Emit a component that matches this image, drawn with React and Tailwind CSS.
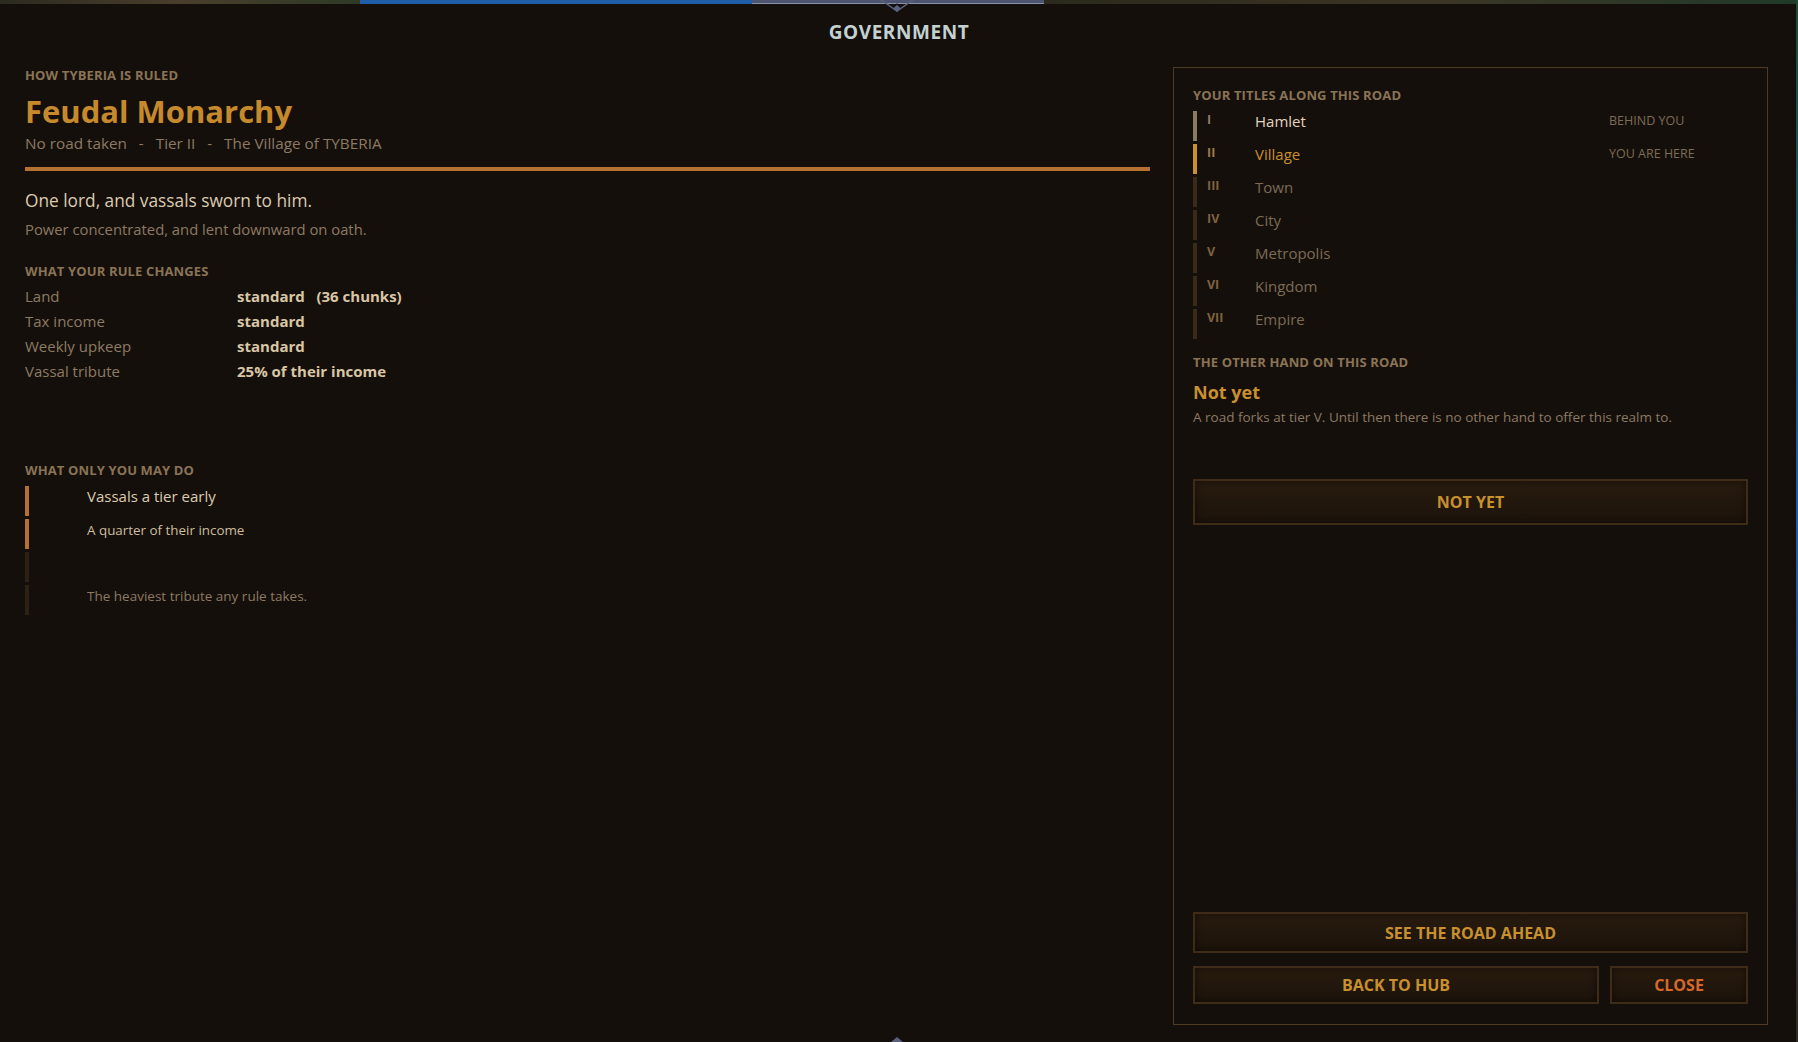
import React from 'react';

const titles = [
  { num: 'I', name: 'Hamlet', state: 'past', note: 'BEHIND YOU' },
  { num: 'II', name: 'Village', state: 'current', note: 'YOU ARE HERE' },
  { num: 'III', name: 'Town', state: 'future' },
  { num: 'IV', name: 'City', state: 'future' },
  { num: 'V', name: 'Metropolis', state: 'future' },
  { num: 'VI', name: 'Kingdom', state: 'future' },
  { num: 'VII', name: 'Empire', state: 'future' },
];

const rowStyles = {
  past: { bar: 'bg-[#8a7a63]', num: 'text-[#8c7c66]', name: 'text-[#e2d4bf]' },
  current: { bar: 'bg-[#c8902f]', num: 'text-[#9c7c48]', name: 'text-[#c8902f]' },
  future: { bar: 'bg-[#3b2a1a]', num: 'text-[#7e6240]', name: 'text-[#7c6b56]' },
};

const changes = [
  { label: 'Land', value: 'standard', extra: '(36 chunks)' },
  { label: 'Tax income', value: 'standard' },
  { label: 'Weekly upkeep', value: 'standard' },
  { label: 'Vassal tribute', value: '25% of their income' },
];

function Heading({ children, className = '' }) {
  return (
    <p className={`text-[13px] leading-4 font-bold tracking-[0.01em] text-[#8a7456] uppercase ${className}`}>
      {children}
    </p>
  );
}

function WoodButton({ children, className = '', tone = 'gold' }) {
  return (
    <button
      className={`flex items-center justify-center border-2 border-[#3e2b18] bg-gradient-to-b from-[#2a1c0f] via-[#22170d] to-[#1d140b] shadow-[inset_0_0_8px_rgba(0,0,0,0.55)] text-[16px] font-bold ${tone === 'gold' ? 'text-[#c8902e]' : 'text-[#d8682a]'} ${className}`}
    >
      {children}
    </button>
  );
}

export default function App() {
  return (
    <div className="relative h-[1042px] w-full overflow-hidden bg-[#150f0b] font-['Open_Sans','Noto_Sans',sans-serif]">
      {/* game world peeking through at the top */}
      <div className="absolute inset-x-0 top-0 flex h-1">
        <div className="w-[360px] bg-gradient-to-r from-[#2c2a20] via-[#4a3e2c] to-[#2d3a26]" />
        <div className="w-[392px] bg-[#1f5ea8]" />
        <div className="w-[292px] bg-[#4e5570] border-b border-[#8a90a8]" />
        <div className="flex-1 bg-gradient-to-r from-[#2b2a1c] via-[#3c3424] to-[#1f3a2a]" />
      </div>
      <svg className="absolute left-[879px] top-0" width="36" height="13" viewBox="0 0 36 13">
        <path d="M2 0 L18 11 L34 0" fill="none" stroke="#5b6079" strokeWidth="1.5" />
        <path d="M13 0 L18 4 L23 0 Z" fill="#4e5570" />
        <path d="M18 5 L22 8.5 L18 12 L14 8.5 Z" fill="#5b6280" />
      </svg>
      <div className="absolute right-0 top-0 bottom-0 w-[2px] bg-gradient-to-b from-[#1f4a33] via-[#1f5ea8] to-[#2e2a20]" />
      <svg className="absolute bottom-0 left-[891px]" width="12" height="5" viewBox="0 0 12 5">
        <path d="M6 0 L12 5 L0 5 Z" fill="#5b6079" />
      </svg>

      <h1 className="pt-5 text-center text-[19px] leading-6 font-bold tracking-[0.03em] text-[#c3d1d1]">
        GOVERNMENT
      </h1>

      <div className="mt-[23px] flex gap-[23px] pl-[25px] pr-[30px]">
        {/* left: the rule itself */}
        <section className="flex-1">
          <Heading>How Tyberia is ruled</Heading>
          <h2 className="mt-[10px] text-[31px] leading-9 font-bold text-[#c68a2c]">Feudal Monarchy</h2>
          <p className="mt-1 text-[15.3px] leading-5 text-[#8c7a64] whitespace-pre">
            No road taken   -   Tier II   -   The Village of TYBERIA
          </p>
          <div className="mt-[14px] h-1 bg-[#b5712f]" />

          <p className="mt-[18px] text-[17.3px] leading-6 text-[#dccbb0]">One lord, and vassals sworn to him.</p>
          <p className="mt-[6px] text-[14.8px] leading-5 text-[#8c7a63]">Power concentrated, and lent downward on oath.</p>

          <Heading className="mt-[24px]">What your rule changes</Heading>
          <div className="mt-[5px]">
            {changes.map((c) => (
              <div key={c.label} className="flex h-[25px] items-center text-[15px]">
                <span className="w-[212px] text-[#8c7b63]">{c.label}</span>
                <span className="font-bold text-[#d9c6a5] whitespace-pre">
                  {c.value}
                  {c.extra ? `   ${c.extra}` : ''}
                </span>
              </div>
            ))}
          </div>

          <Heading className="mt-[78px]">What only you may do</Heading>
          <div className="mt-[8px] flex flex-col gap-[3px]">
            <div className="flex h-[30px] items-start">
              <div className="h-full w-1 bg-[#b5712f]" />
              <span className="ml-[58px] text-[15px] leading-5 text-[#dccbb0]">Vassals a tier early</span>
            </div>
            <div className="flex h-[30px] items-start">
              <div className="h-full w-1 bg-[#b5712f]" />
              <span className="ml-[58px] pt-[1px] text-[13.4px] leading-5 text-[#cdbd9e]">A quarter of their income</span>
            </div>
            <div className="flex h-[30px] items-start">
              <div className="h-full w-1 bg-[#2e2014]" />
            </div>
            <div className="flex h-[30px] items-start">
              <div className="h-full w-1 bg-[#2e2014]" />
              <span className="ml-[58px] pt-[1px] text-[13.5px] leading-5 text-[#8c7a63]">The heaviest tribute any rule takes.</span>
            </div>
          </div>
        </section>

        {/* right: the road */}
        <aside className="flex h-[958px] w-[595px] flex-col border border-[#4f3b25] px-[19px] pt-[19px] pb-[20px]">
          <Heading>Your titles along this road</Heading>
          <div className="mt-[8px] flex flex-col gap-[3px]">
            {titles.map((t) => {
              const s = rowStyles[t.state];
              return (
                <div key={t.num} className="flex h-[30px] items-start">
                  <div className={`h-full w-1 ${s.bar}`} />
                  <span className={`ml-[10px] w-[48px] pt-[1px] text-[12.5px] leading-4 font-bold ${s.num}`}>{t.num}</span>
                  <span className={`flex-1 text-[15px] leading-5 ${s.name}`}>{t.name}</span>
                  <span className="w-[139px] pt-[2px] text-[12.5px] leading-4 text-[#7d6c57]">{t.note}</span>
                </div>
              );
            })}
          </div>

          <Heading className="mt-[15px]">The other hand on this road</Heading>
          <p className="mt-[10px] text-[18px] leading-6 font-bold text-[#c8902e]">Not yet</p>
          <p className="mt-[4px] text-[13.5px] leading-[18px] text-[#8c7a63]">
            A road forks at tier V. Until then there is no other hand to offer this realm to.
          </p>

          <WoodButton className="mt-[53px] h-[46px] w-full">NOT YET</WoodButton>

          <WoodButton className="mt-auto h-[41px] w-full">SEE THE ROAD AHEAD</WoodButton>
          <div className="mt-[13px] flex gap-[11px]">
            <WoodButton className="h-[38px] flex-1">BACK TO HUB</WoodButton>
            <WoodButton className="h-[38px] w-[138px]" tone="orange">CLOSE</WoodButton>
          </div>
        </aside>
      </div>
    </div>
  );
}
